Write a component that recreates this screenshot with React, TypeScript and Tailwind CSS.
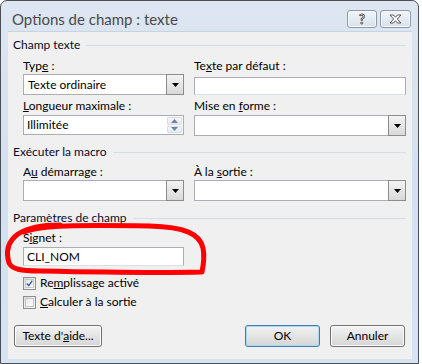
import React from 'react';

const font = "font-['Segoe_UI',Lato,'Noto_Sans',sans-serif]";

const Arrow: React.FC = () => (
  <svg width="7" height="4" viewBox="0 0 7 4">
    <path d="M0 0 H7 L3.5 4 Z" fill="#000" />
  </svg>
);

const Combo: React.FC<{ value?: string; className?: string }> = ({ value = '', className = '' }) => (
  <div className={`flex h-[21px] items-stretch border border-[#abadb3] bg-white ${className}`}>
    <div className="flex flex-1 items-center pl-[4px] text-[12px] text-black">{value}</div>
    <div className="-my-px -mr-px flex w-[18px] items-center justify-center border border-[#8c8c8c] bg-gradient-to-b from-[#f3f3f3] to-[#d9d9d9]">
      <Arrow />
    </div>
  </div>
);

const Field: React.FC<{ value?: string; className?: string }> = ({ value = '', className = '' }) => (
  <div className={`flex items-center border border-[#abadb3] border-b-[#dbdfe6] bg-white pl-[3px] text-[12px] text-black ${className}`}>
    {value}
  </div>
);

const Spinner: React.FC<{ value: string }> = ({ value }) => (
  <div className="flex h-[20px] items-stretch border border-[#abadb3] bg-white">
    <div className="flex flex-1 items-center pl-[3px] text-[12px] text-black">{value}</div>
    <div className="flex w-[16px] flex-col gap-px py-px pr-px">
      <div className="flex flex-1 items-center justify-center rounded-[1px] border border-[#d8dde5] bg-gradient-to-b from-[#f6f8fb] to-[#e6ebf2]">
        <svg width="7" height="4" viewBox="0 0 7 4"><path d="M0 4 H7 L3.5 0 Z" fill="#6c82ad" /></svg>
      </div>
      <div className="flex flex-1 items-center justify-center rounded-[1px] border border-[#d8dde5] bg-gradient-to-b from-[#f6f8fb] to-[#e6ebf2]">
        <svg width="7" height="4" viewBox="0 0 7 4"><path d="M0 0 H7 L3.5 4 Z" fill="#6c82ad" /></svg>
      </div>
    </div>
  </div>
);

const Group: React.FC<{ title: string; className?: string }> = ({ title, className = '' }) => (
  <div className={`flex h-[16px] items-center gap-[6px] pl-[5px] pr-[6px] ${className}`}>
    <span className="text-[12px] leading-[16px] text-[#0a0a28]">{title}</span>
    <div className="h-px flex-1 bg-[#d5dfe5]" />
  </div>
);

const Label: React.FC<{ children: React.ReactNode }> = ({ children }) => (
  <div className="h-[16px] text-[12px] leading-[16px] text-black">{children}</div>
);

const Check: React.FC<{ checked?: boolean; children: React.ReactNode; className?: string }> = ({ checked, children, className = '' }) => (
  <div className={`flex h-[16px] items-center gap-[4px] pl-[15px] ${className}`}>
    <div className="flex h-[13px] w-[13px] items-center justify-center border border-[#8e8f8f] bg-gradient-to-br from-[#dcdcdc] to-[#fbfbfb] p-px">
      <div className="flex h-full w-full items-center justify-center border border-[#c8c8c8] bg-gradient-to-br from-[#e6e6e6] to-[#ffffff]">
        {checked && (
          <svg width="9" height="9" viewBox="0 0 9 9">
            <path d="M1 4.5 L3.5 7.2 L8 1" fill="none" stroke="#3f5a9e" strokeWidth="1.8" />
          </svg>
        )}
      </div>
    </div>
    <span className="text-[12px] leading-[16px] text-black">{children}</span>
  </div>
);

const Btn: React.FC<{ children: React.ReactNode; className?: string; primary?: boolean }> = ({ children, className = '', primary }) => (
  <div
    className={`flex h-[22px] items-center justify-center rounded-[3px] border text-[12px] text-black ${
      primary
        ? 'border-[#3c7fb1] bg-gradient-to-b from-[#f2f2f2] to-[#d6d6d6] shadow-[inset_0_0_0_1px_#a9daf5]'
        : 'border-[#707070] bg-gradient-to-b from-[#f3f3f3] to-[#d6d6d6] shadow-[inset_0_0_0_1px_#fcfcfc]'
    } ${className}`}
  >
    {children}
  </div>
);

const TitleBtn: React.FC<{ children: React.ReactNode; className?: string }> = ({ children, className = '' }) => (
  <div className={`flex h-[18px] items-center justify-center rounded-[3px] border border-[#8d9aab] bg-gradient-to-b from-[#f1f5fa] to-[#d7e1ed] shadow-[inset_0_0_0_1px_#f6f9fc] ${className}`}>
    {children}
  </div>
);

export default function App() {
  return (
    <div className={`h-[364px] w-[422px] bg-white ${font}`}>
      <div className="relative flex h-[364px] w-[419px] flex-col rounded-t-[7px] border border-[#4b4f55] bg-gradient-to-b from-[#dde6f1] via-[#d3e0ef] to-[#d6e3f2]">
        {/* title bar */}
        <div className="flex h-[30px] items-start">
          <div className="pl-[11px] pt-[9px] text-[15px] leading-[18px] text-[#4a4a4a]">Options de champ : texte</div>
          <div className="ml-auto mr-[7px] mt-[9px] flex gap-[3px]">
            <TitleBtn className="w-[30px]">
              <span className="text-[13px] font-bold leading-[13px] text-white [-webkit-text-stroke:0.8px_#4a4a4a]">?</span>
            </TitleBtn>
            <TitleBtn className="w-[31px]">
              <svg width="13" height="10" viewBox="0 0 13 10">
                <path
                  d="M1 1 H4.5 L6.5 3.3 L8.5 1 H12 L8.3 5 L12 9 H8.5 L6.5 6.7 L4.5 9 H1 L4.7 5 Z"
                  fill="#fff"
                  stroke="#4a4a4a"
                  strokeWidth="0.9"
                  strokeLinejoin="round"
                />
              </svg>
            </TitleBtn>
          </div>
        </div>

        {/* client area */}
        <div className="ml-[7px] mr-[6px] flex h-[328px] flex-col border-t border-[#c5d3e2] bg-[#f0f0f0]">
          <Group title="Champ texte" className="mt-[5px]" />

          <div className="mt-[5px] grid grid-cols-[161px_212px] gap-x-[10px] pl-[15px]">
            <div className="flex flex-col">
              <Label>Typ<u>e</u> :</Label>
              <Combo value="Texte ordinaire" />
              <div className="mt-[3px]">
                <Label><u>L</u>ongueur maximale :</Label>
              </div>
              <div className="mt-px">
                <Spinner value="Illimitée" />
              </div>
            </div>
            <div className="flex flex-col">
              <Label>Te<u>x</u>te par défaut :</Label>
              <Field className="mt-[3px] h-[18px]" />
              <div className="mt-[3px]">
                <Label>Mise en <u>f</u>orme :</Label>
              </div>
              <div className="mt-px">
                <Combo className="h-[20px]" />
              </div>
            </div>
          </div>

          <Group title="Exécuter la macro" className="mt-[8px]" />

          <div className="mt-[4px] grid grid-cols-[161px_212px] gap-x-[10px] pl-[15px]">
            <div className="flex flex-col">
              <Label>A<u>u</u> démarrage :</Label>
              <Combo />
            </div>
            <div className="flex flex-col">
              <Label>À la <u>s</u>ortie :</Label>
              <Combo />
            </div>
          </div>

          <Group title="Paramètres de champ" className="mt-[9px]" />

          <div className="mt-[4px] flex w-[176px] flex-col pl-[15px]">
            <Label>S<u>i</u>gnet :</Label>
            <Field value="CLI_NOM" className="mt-px h-[19px]" />
          </div>

          <Check checked className="mt-[9px]">Re<u>m</u>plissage activé</Check>
          <Check className="mt-[3px]"><u>C</u>alculer à la sortie</Check>

          <div className="mt-[15px] flex items-center gap-[10px] pl-[6px] pr-[7px]">
            <Btn className="w-[88px]">Texte d'<u>a</u>ide...</Btn>
            <Btn primary className="ml-auto w-[75px]">OK</Btn>
            <Btn className="w-[75px]">Annuler</Btn>
          </div>
        </div>

        {/* hand-drawn red mark */}
        <svg className="pointer-events-none absolute left-[-1px] top-[-1px]" width="422" height="364" viewBox="0 0 422 364">
          <path
            d="M24 232 C 40 225, 80 225, 150 226 C 185 227, 200 234, 203 248 C 205 258, 203 267, 202 272 C 160 273, 90 272, 40 271 C 20 271, 12 269, 9 263 C 6 253, 7 242, 18 234 C 26 229, 40 225, 60 225"
            fill="none"
            stroke="#ff0000"
            strokeWidth="5"
            strokeLinecap="round"
            strokeLinejoin="round"
          />
        </svg>
      </div>
    </div>
  );
}
